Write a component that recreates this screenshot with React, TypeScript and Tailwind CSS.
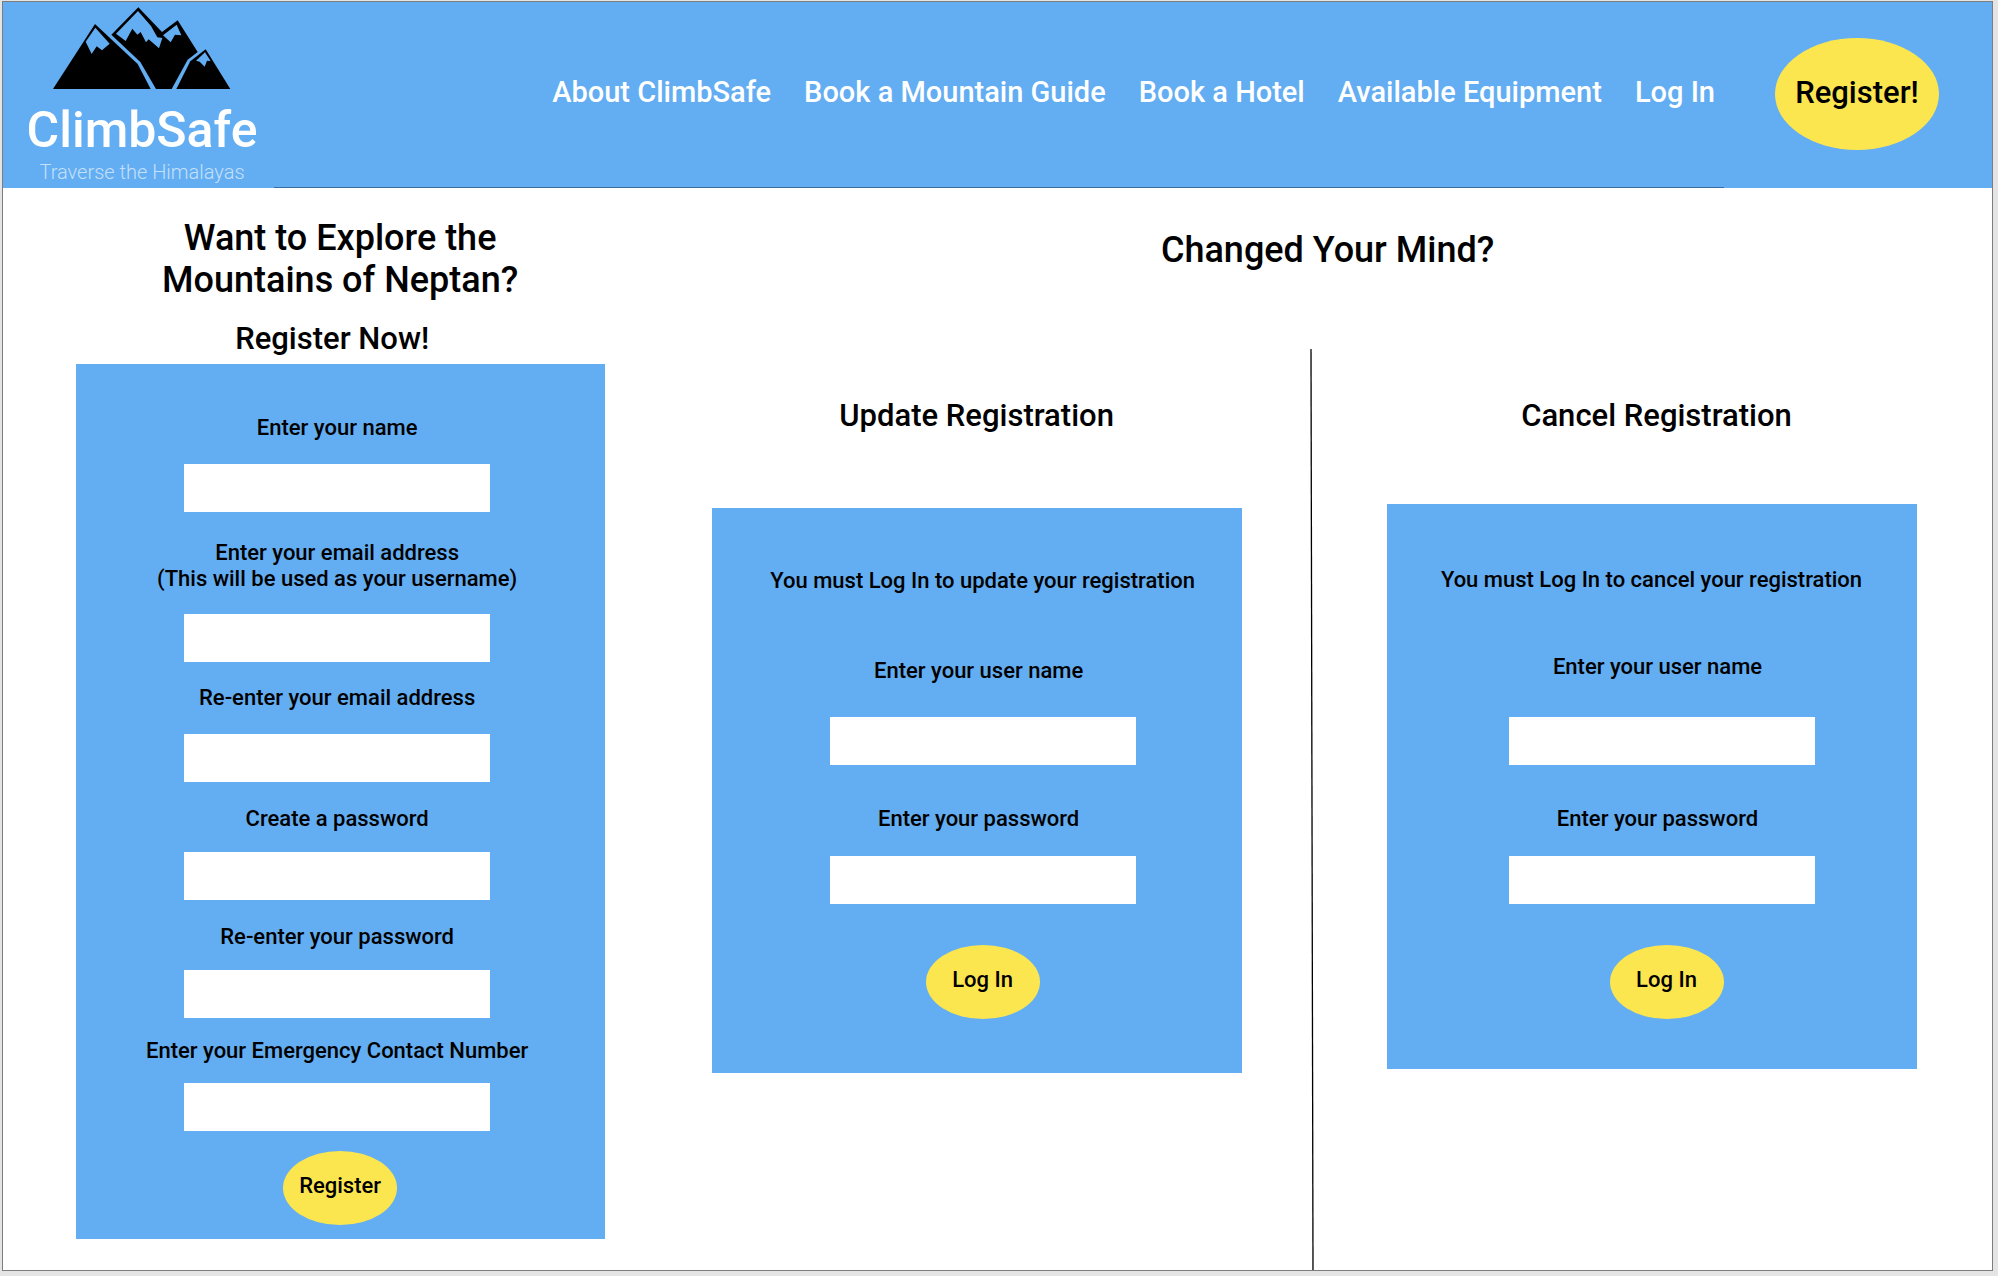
import type { ReactNode } from "react";

const navLinks = [
  "About ClimbSafe",
  "Book a Mountain Guide",
  "Book a Hotel",
  "Available Equipment",
  "Log In",
];

function MountainLogo() {
  return (
    <svg viewBox="155 20 540 252" className="h-[84px] w-[180px]" aria-hidden="true">
      <g fill="#000">
        <path d="M158 269 L284 74 L412 194 L451 269 Z" />
        <path d="M414 24 L333 106 L420 188 L467 269 L514 269 L562 181 L592 158 L532 63 L485 98 Z" />
        <path d="M616 150 L570 186 L528 269 L690 269 Z" />
      </g>
      <g fill="#63adf2">
        <path d="M285 85 L256 127 L274 164 L289 141 L305 153 L328 133 Z" />
        <path d="M413 35 L347 103 L376 125 L396 88 L411 106 L421 98 L437 129 L445 120 L476 147 L486 116 L471 114 L452 80 Z" />
        <path d="M529 76 L488 108 L511 129 L524 106 L543 108 Z" />
        <path d="M614 159 L587 184 L598 187 L613 202 L620 184 L631 185 Z" />
      </g>
    </svg>
  );
}

function Field({
  id,
  label,
  type = "text",
  className = "",
  gap,
}: {
  id: string;
  label: ReactNode;
  type?: string;
  className?: string;
  gap: string;
}) {
  return (
    <div className={`flex w-full flex-col items-center ${gap} ${className}`}>
      <label htmlFor={id} className="text-center text-[22px] leading-[26px]">
        {label}
      </label>
      <input id={id} type={type} className="h-12 w-[306px] max-w-full bg-white px-3 text-[22px] outline-none" />
    </div>
  );
}

function OvalButton({ children, className }: { children: ReactNode; className: string }) {
  return (
    <button
      type="submit"
      className={`h-[74px] w-[114px] rounded-[50%] bg-[#fce650] pb-1 text-[22px] leading-[26px] font-medium ${className}`}
    >
      {children}
    </button>
  );
}

export default function App() {
  return (
    <div className="flex min-h-screen flex-col bg-[#e4e4e4] pt-px pr-[5px] pb-[5px] pl-0.5 font-['Roboto',sans-serif] font-medium text-black">
      <div className="flex flex-1 flex-col border border-[#7d7d7d] bg-white">
        <header className="relative flex h-[186px] items-center bg-[#63adf2] pr-[53px] pb-[3px] pl-[21px]">
          <a href="#home" className="flex w-[236px] flex-col items-center self-start pt-1">
            <MountainLogo />
            <span className="mt-2.5 text-[50px] leading-[60px] text-white">ClimbSafe</span>
            <span className="text-[20px] leading-6 font-light text-[#c4e0fa]">Traverse the Himalayas</span>
          </a>
          <nav className="ml-auto flex items-center gap-[33px] pb-[3px] text-[29px] leading-8 text-white">
            {navLinks.map((link) => (
              <a key={link} href="#nav" className="whitespace-nowrap">
                {link}
              </a>
            ))}
          </nav>
          <button type="button" className="ml-[60px] h-28 w-[164px] rounded-[50%] bg-[#fce650] text-[31px] font-medium">
            Register!
          </button>
          <div className="absolute right-[268px] bottom-0 left-[271px] h-px bg-[#3a6c9d]" />
        </header>

        <main className="flex flex-1">
          <section className="flex w-[34%] flex-col items-center pt-[29px] pr-0.5">
            <h1 className="text-center text-[36px] leading-[42px]">
              Want to Explore the
              <br />
              Mountains of Neptan?
            </h1>
            <h2 className="mt-[18px] mr-4 text-[31px] leading-10">Register Now!</h2>
            <form className="mt-[5px] flex w-[529px] flex-col items-center bg-[#63adf2] pt-[51px] pb-3.5">
              <div className="flex w-full flex-col items-center pr-1.5">
                <Field id="name" label="Enter your name" gap="gap-[23px]" />
                <Field
                  id="email"
                  type="email"
                  className="mt-7"
                  gap="gap-[22px]"
                  label={
                    <>
                      Enter your email address
                      <br />
                      (This will be used as your username)
                    </>
                  }
                />
                <Field id="email2" type="email" label="Re-enter your email address" className="mt-[23px]" gap="gap-[23px]" />
                <Field id="pw" type="password" label="Create a password" className="mt-6" gap="gap-5" />
                <Field id="pw2" type="password" label="Re-enter your password" className="mt-6" gap="gap-5" />
                <Field id="phone" type="tel" label="Enter your Emergency Contact Number" className="mt-5" gap="gap-[19px]" />
              </div>
              <OvalButton className="mt-5">Register</OvalButton>
            </form>
          </section>

          <div className="flex flex-1 flex-col">
            <h2 className="pt-[41px] pr-4 text-center text-[36px] leading-[42px]">Changed Your Mind?</h2>
            <div className="mt-[78px] flex flex-1">
              <section className="flex flex-1 flex-col items-center pt-[47px] pr-9">
                <h3 className="text-[31px] leading-10">Update Registration</h3>
                <form className="mt-[72px] flex w-[530px] flex-col items-center bg-[#63adf2] pt-[60px] pb-[54px] pl-3 [&_label]:pr-2">
                  <p className="text-[22px] leading-[26px]">You must Log In to update your registration</p>
                  <Field id="update-user" label="Enter your user name" className="mt-16" gap="gap-[33px]" />
                  <Field id="update-pw" type="password" label="Enter your password" className="mt-[41px]" gap="gap-6" />
                  <OvalButton className="mt-[41px]">Log In</OvalButton>
                </form>
              </section>
              <svg className="w-1 self-stretch" viewBox="0 0 4 920" preserveAspectRatio="none" aria-hidden="true">
                <line x1="1" y1="0" x2="3" y2="920" stroke="#000" strokeWidth="1.3" />
              </svg>
              <section className="flex w-[678px] flex-col items-center pt-[47px] pr-[3px]">
                <h3 className="ml-2.5 text-[31px] leading-10">Cancel Registration</h3>
                <form className="mt-[68px] flex w-[530px] flex-col items-center bg-[#63adf2] pt-[63px] pb-[50px] [&_label]:pr-2">
                  <p className="text-[22px] leading-[26px]">You must Log In to cancel your registration</p>
                  <div className="flex w-full flex-col items-center pl-5">
                    <Field id="cancel-user" label="Enter your user name" className="mt-[61px]" gap="gap-[37px]" />
                    <Field id="cancel-pw" type="password" label="Enter your password" className="mt-[41px]" gap="gap-6" />
                    <OvalButton className="mt-[41px] ml-2.5">Log In</OvalButton>
                  </div>
                </form>
              </section>
            </div>
          </div>
        </main>
      </div>
    </div>
  );
}
